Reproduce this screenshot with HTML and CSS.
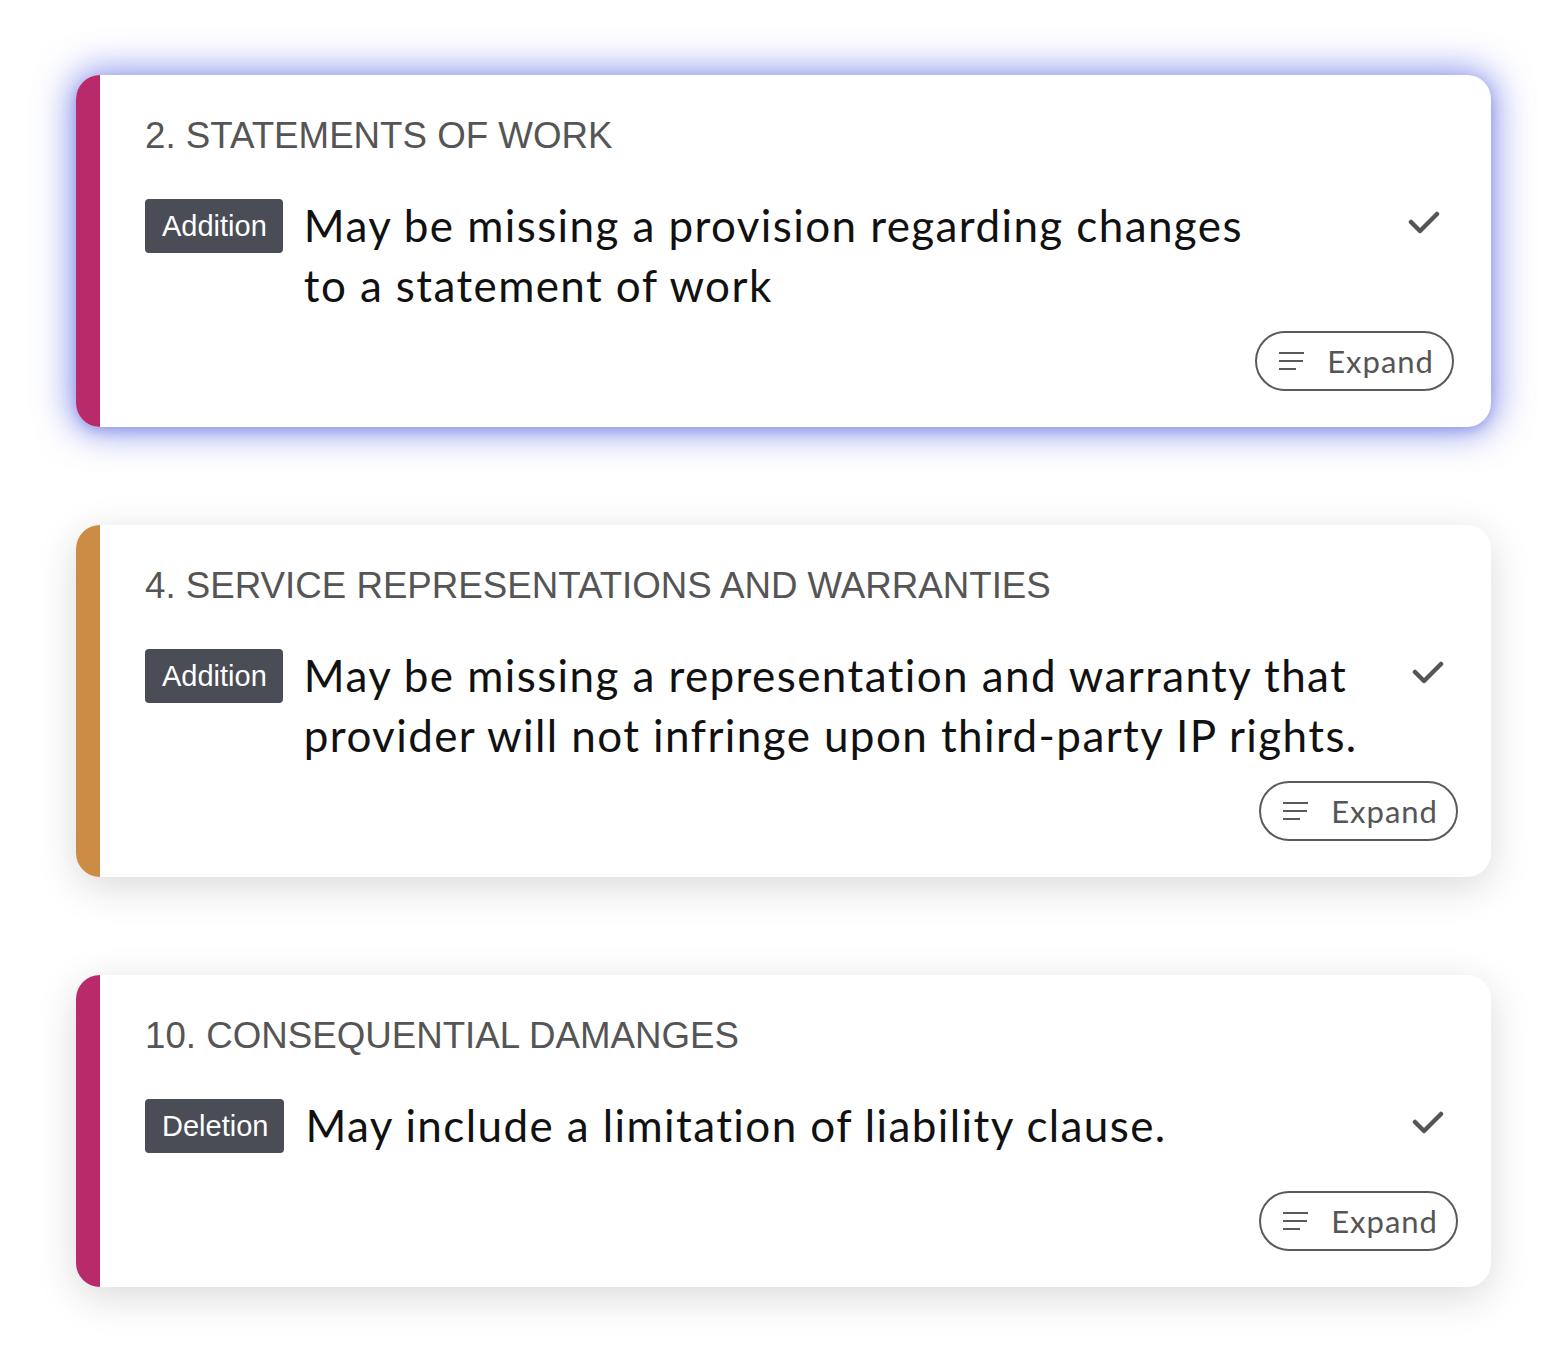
FILE: index.html
```html
<!DOCTYPE html>
<html lang="en">
<head>
<meta charset="utf-8">
<title>Review items</title>
<link rel="stylesheet" href="styles.css">
</head>
<body>
<main class="list">
  <section class="card card--active">
    <div class="stripe stripe--magenta"></div>
    <div class="content content--wide">
      <h2 class="title">2. STATEMENTS OF WORK</h2>
      <div class="row">
        <span class="badge">Addition</span>
        <p class="text">May be missing a provision regarding changes<br>to a statement of work</p>
        <svg class="check" viewBox="0 0 32 24" width="32" height="24"><path d="M3 11 L12 20 L29 3"/></svg>
      </div>
      <div class="actions">
        <button class="expand"><svg class="lines" viewBox="0 0 26 18" width="26" height="18"><path d="M0 1 H25 M0 9 H24 M0 17 H17"/></svg><span>Expand</span></button>
      </div>
    </div>
  </section>

  <section class="card">
    <div class="stripe stripe--orange"></div>
    <div class="content">
      <h2 class="title">4. SERVICE REPRESENTATIONS AND WARRANTIES</h2>
      <div class="row">
        <span class="badge">Addition</span>
        <p class="text">May be missing a representation and warranty that<br>provider will not infringe upon third-party IP rights.</p>
        <svg class="check" viewBox="0 0 32 24" width="32" height="24"><path d="M3 11 L12 20 L29 3"/></svg>
      </div>
      <div class="actions">
        <button class="expand"><svg class="lines" viewBox="0 0 26 18" width="26" height="18"><path d="M0 1 H25 M0 9 H24 M0 17 H17"/></svg><span>Expand</span></button>
      </div>
    </div>
  </section>

  <section class="card">
    <div class="stripe stripe--magenta"></div>
    <div class="content">
      <h2 class="title">10. CONSEQUENTIAL DAMANGES</h2>
      <div class="row">
        <span class="badge">Deletion</span>
        <p class="text">May include a limitation of liability clause.</p>
        <svg class="check" viewBox="0 0 32 24" width="32" height="24"><path d="M3 11 L12 20 L29 3"/></svg>
      </div>
      <div class="actions">
        <button class="expand"><svg class="lines" viewBox="0 0 26 18" width="26" height="18"><path d="M0 1 H25 M0 9 H24 M0 17 H17"/></svg><span>Expand</span></button>
      </div>
    </div>
  </section>
</main>
</body>
</html>
```

FILE: styles.css
```css
* { box-sizing: border-box; }

html, body {
  margin: 0;
  background: #ffffff;
}

body {
  font-family: "Liberation Sans", Arial, sans-serif;
}

.list {
  display: flex;
  flex-direction: column;
  gap: 98px;
  width: 1415px;
  margin-left: 76px;
  padding-top: 75px;
  padding-bottom: 73px;
}

.card {
  display: flex;
  background: #ffffff;
  border-radius: 24px;
  overflow: hidden;
  box-shadow: 0 10px 40px rgba(0, 0, 0, 0.15);
}

.card--active {
  box-shadow: 0 0 36px 5px rgba(92, 106, 226, 0.7), 0 4px 12px rgba(92, 106, 226, 0.35);
}

.stripe {
  width: 24px;
  flex: none;
}

.stripe--magenta { background: #b82a69; }
.stripe--orange { background: #cc8c46; }

.content {
  flex: 1;
  padding: 40px 33px 36px 45px;
}

.content--wide {
  padding-right: 37px;
}

.title {
  margin: 0;
  font-family: "Liberation Sans", Arial, sans-serif;
  font-weight: 400;
  font-size: 36.7px;
  line-height: 42px;
  color: #555555;
}

.row {
  display: flex;
  align-items: flex-start;
  min-height: 80px;
  margin-top: 38px;
  margin-bottom: 16px;
}

.badge {
  flex: none;
  margin-top: 4px;
  height: 54px;
  padding: 0 16px 0 17px;
  display: flex;
  align-items: center;
  background: #4a4d55;
  color: #ffffff;
  border-radius: 4px;
  font-family: "Liberation Sans", Arial, sans-serif;
  font-size: 29px;
}

.text {
  flex: 1;
  margin: 0 0 0 21px;
  font-family: Lato, "Noto Sans", sans-serif;
  font-size: 44px;
  letter-spacing: 1.4px;
  line-height: 60px;
  color: #111111;
  white-space: nowrap;
}

.check {
  flex: none;
  margin-top: 16px;
  margin-right: 14px;
  fill: none;
  stroke: #555555;
  stroke-width: 4.5;
  stroke-linecap: round;
  stroke-linejoin: round;
}

.actions {
  display: flex;
  justify-content: flex-end;
}

.expand {
  display: flex;
  align-items: center;
  gap: 22px;
  height: 60px;
  padding: 0 18px 0 22px;
  background: #ffffff;
  border: 2px solid #5a5a5a;
  border-radius: 30px;
  font-family: Lato, "Noto Sans", sans-serif;
  font-size: 31px;
  letter-spacing: 1px;
  color: #555555;
}

.lines {
  fill: none;
  stroke: #5a5a5a;
  stroke-width: 2;
}
```
